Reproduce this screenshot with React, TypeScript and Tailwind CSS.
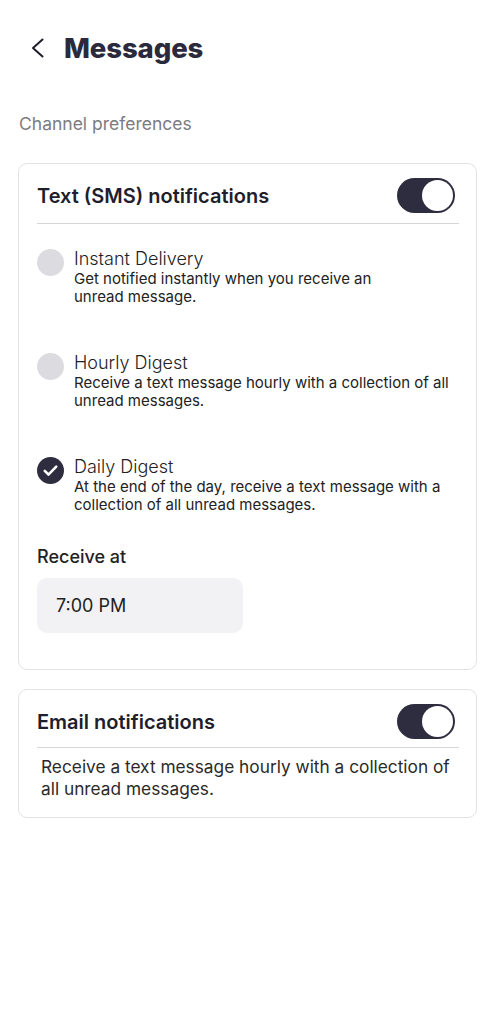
interface Option {
  title: string
  desc: string
  selected?: boolean
}

const OPTIONS: Option[] = [
  { title: "Instant Delivery", desc: "Get notified instantly when you receive an\nunread message." },
  { title: "Hourly Digest", desc: "Receive a text message hourly with a collection of all\nunread messages." },
  {
    title: "Daily Digest",
    desc: "At the end of the day, receive a text message with a\ncollection of all unread messages.",
    selected: true,
  },
]

function Toggle() {
  return (
    <div className="w-[58px] h-[35px] mr-[4px] rounded-full bg-[#2e2d40] flex items-center justify-end p-[2px] shrink-0">
      <div className="w-[31px] h-[31px] rounded-full bg-white" />
    </div>
  )
}

function Radio({ selected }: { selected?: boolean }) {
  if (selected) {
    return (
      <div className="w-[27px] h-[27px] rounded-full bg-[#2e2d40] flex items-center justify-center shrink-0 mt-[1px]">
        <svg width="17" height="17" viewBox="0 0 16 16" fill="none">
          <path d="M2.6 8.4l3.5 3.4L13.4 4.4" stroke="white" strokeWidth="2.4" strokeLinecap="round" strokeLinejoin="round" />
        </svg>
      </div>
    )
  }
  return <div className="w-[27px] h-[27px] rounded-full bg-[#dcdce0] shrink-0 mt-[1px]" />
}

export default function App() {
  return (
    <div className="min-h-[1024px] bg-white font-['Inter',sans-serif] text-[#1f1e2c]">
      {/* Header */}
      <div className="flex items-center pl-[31px] pt-[32px] h-[64px]">
        <svg width="14" height="22" viewBox="0 0 14 22" fill="none" className="shrink-0">
          <path d="M11.5 2.5L2 11l9.5 8.5" stroke="#1f1e2c" strokeWidth="2" strokeLinecap="round" strokeLinejoin="round" />
        </svg>
        <h1 className="ml-[19px] text-[27.5px] leading-[32px] font-extrabold text-[#2a2a3c] tracking-[-0.1px]">Messages</h1>
      </div>

      <p className="mt-[48px] pl-[19px] text-[17.5px] leading-[24px] text-[#7b7b80]">Channel preferences</p>

      {/* SMS card */}
      <div className="mt-[27px] ml-[18px] mr-[19px] border border-[#e3e3e6] rounded-[9px] pl-[18px] pr-[17px] pt-[14px] pb-[36px]">
        <div className="flex items-center justify-between">
          <h2 className="text-[20px] leading-[26px] font-semibold">Text (SMS) notifications</h2>
          <Toggle />
        </div>
        <div className="h-px bg-[#d6d6da] mt-[10px]" />

        <div className="flex flex-col gap-[46px] mt-[24px]">
          {OPTIONS.map((o) => (
            <div key={o.title} className="flex items-start gap-[10px]">
              <Radio selected={o.selected} />
              <div className="flex flex-col">
                <span className="text-[18px] leading-[22px] font-light text-[#222]">{o.title}</span>
                <span className="text-[15px] leading-[18px] text-[#222] whitespace-pre-line">{o.desc}</span>
              </div>
            </div>
          ))}
        </div>

        <p className="mt-[32px] text-[18px] leading-[22px] font-medium text-[#222]">Receive at</p>
        <div className="mt-[10px] w-[206px] h-[55px] rounded-[10px] bg-[#f2f2f4] flex items-center pl-[19px] text-[18px] text-[#222]">
          7:00 PM
        </div>
      </div>

      {/* Email card */}
      <div className="mt-[19px] ml-[18px] mr-[19px] border border-[#e3e3e6] rounded-[9px] pl-[18px] pr-[17px] pt-[14px] pb-[17px]">
        <div className="flex items-center justify-between">
          <h2 className="text-[20px] leading-[26px] font-semibold">Email notifications</h2>
          <Toggle />
        </div>
        <div className="h-px bg-[#d6d6da] mt-[8px]" />
        <p className="mt-[8px] pl-[4px] text-[17.3px] leading-[22px] text-[#2a2a2a]">
          Receive a text message hourly with a collection of all unread messages.
        </p>
      </div>
    </div>
  )
}
